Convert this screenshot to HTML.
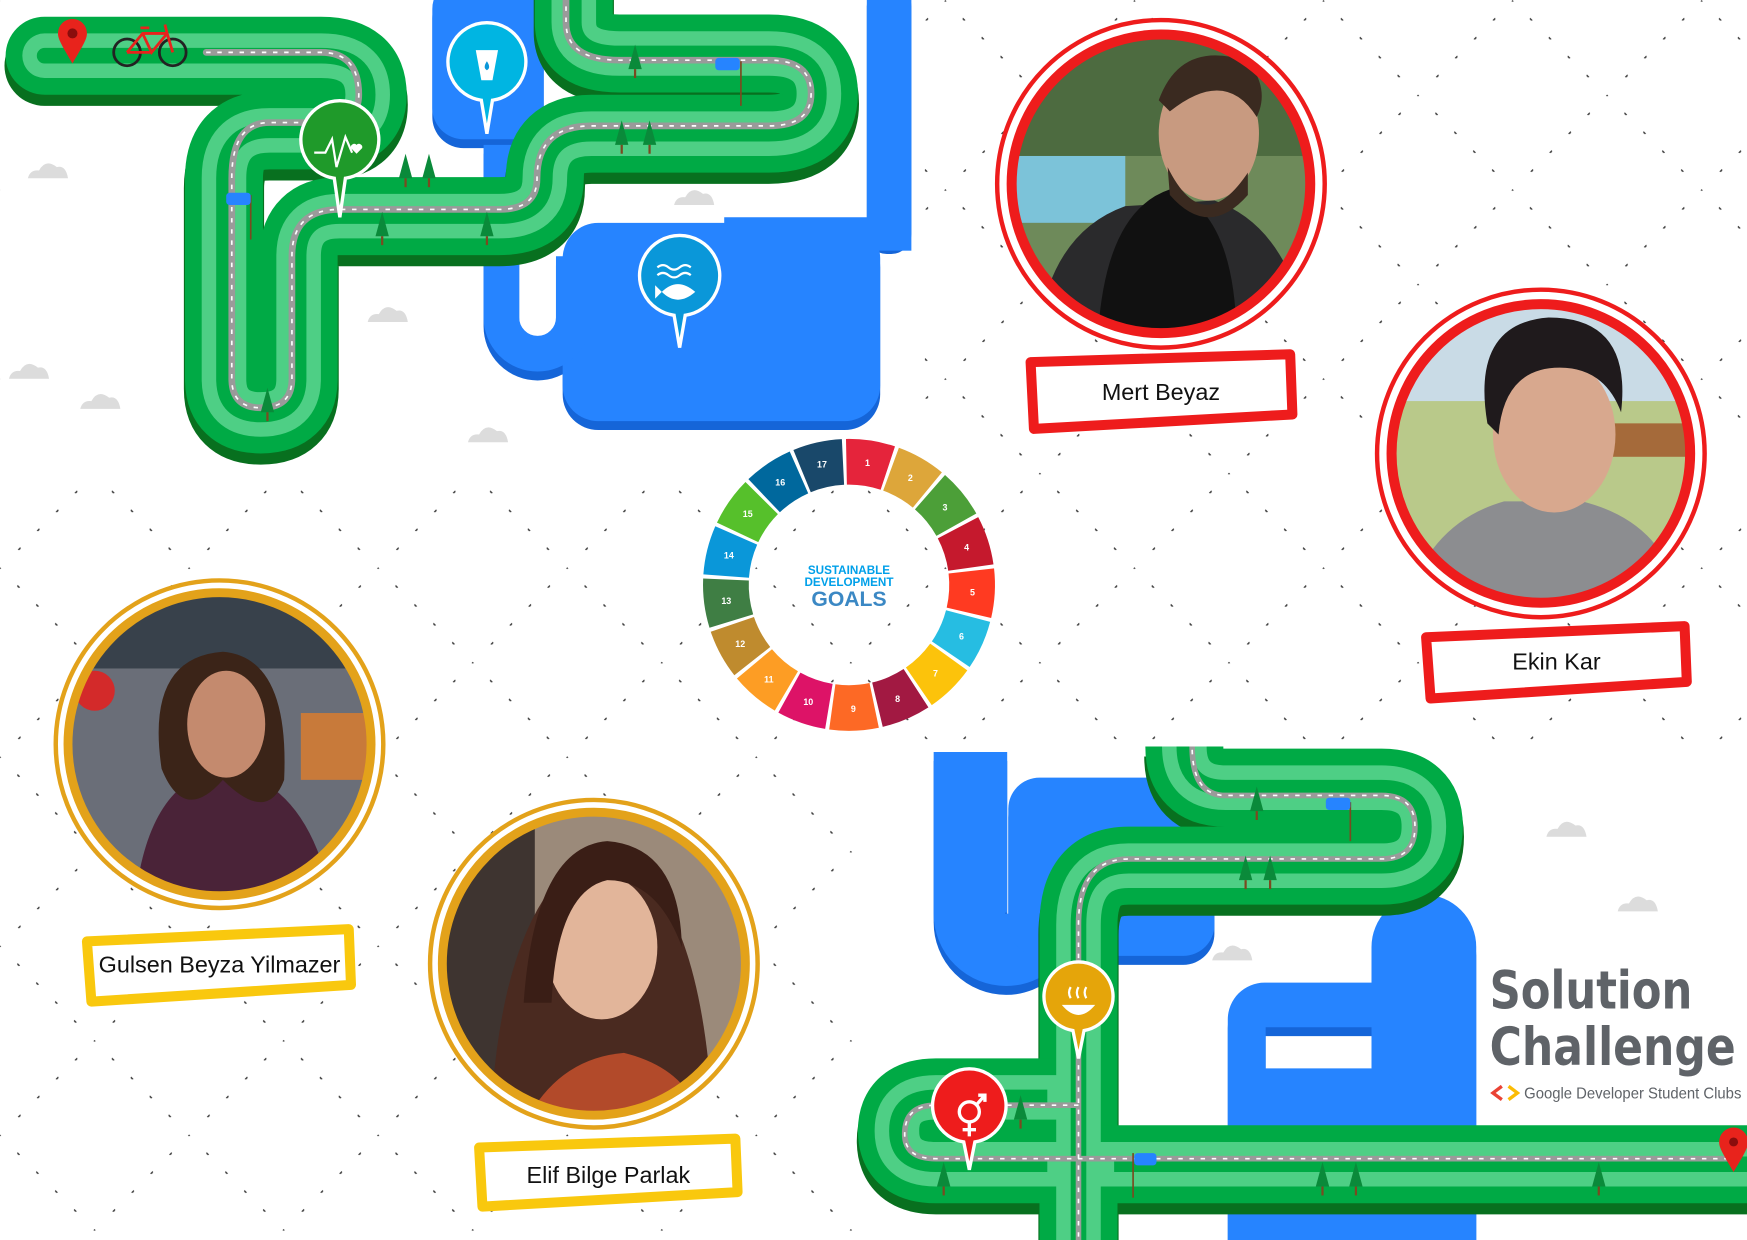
<!DOCTYPE html>
<html><head><meta charset="utf-8"><style>
html,body{margin:0;padding:0;background:#fff;overflow:hidden}
svg{display:block}
text{font-family:"Liberation Sans",sans-serif}
</style></head><body>
<svg id="s" width="1747" height="1240" viewBox="0 0 1568 1113" xmlns="http://www.w3.org/2000/svg">
<defs>
<pattern id="dots" width="120" height="120" patternUnits="userSpaceOnUse" patternTransform="rotate(45)">
<g fill="#444">
<circle cx="0" cy="0" r="1.5"/><circle cx="24" cy="0" r="1.5"/><circle cx="48" cy="0" r="1.5"/><circle cx="72" cy="0" r="1.5"/><circle cx="96" cy="0" r="1.5"/>
<circle cx="0" cy="24" r="1.5"/><circle cx="0" cy="48" r="1.5"/><circle cx="0" cy="72" r="1.5"/><circle cx="0" cy="96" r="1.5"/>
</g></pattern>
<clipPath id="cM"><circle cx="1042" cy="165" r="133"/></clipPath>
<clipPath id="cE"><circle cx="1383" cy="407" r="133"/></clipPath>
<clipPath id="cG"><circle cx="197" cy="668" r="135"/></clipPath>
<clipPath id="cB"><circle cx="533" cy="865" r="135"/></clipPath>
<g id="cloud"><path d="M0,14 Q2,6 10,7 Q16,-4 26,4 Q34,2 36,14 Z" fill="#dcdcdc"/></g>
<g id="tree"><polygon points="0,-22 -6,0 6,0" fill="#0a8a3a"/><rect x="-1" y="0" width="2" height="8" fill="#7a4a20"/></g>
</defs>
<rect width="1568" height="1113" fill="#fff"/>
<rect width="1568" height="1113" fill="url(#dots)"/>
<rect x="0" y="0" width="830" height="440" fill="#fff"/>
<rect x="770" y="665" width="798" height="448" fill="#fff"/>

<use href="#cloud" x="25" y="146"/><use href="#cloud" x="8" y="326"/><use href="#cloud" x="72" y="353"/>
<use href="#cloud" x="330" y="275"/><use href="#cloud" x="420" y="383"/><use href="#cloud" x="605" y="170"/>
<use href="#cloud" x="1388" y="737"/><use href="#cloud" x="1452" y="804"/><use href="#cloud" x="1088" y="848"/>

<!-- TOP blue -->
<g fill="#1565d8" transform="translate(0,8)">
<rect x="388" y="-20" width="100" height="145" rx="28"/>
<rect x="778" y="-20" width="40" height="240" rx="18"/>
<rect x="505" y="200" width="285" height="178" rx="32"/>
<path d="M450,130 V285 A32,32 0 0 0 515,285 V230" fill="none" stroke="#1565d8" stroke-width="32"/>
</g>
<g fill="#2684ff">
<rect x="388" y="-20" width="100" height="145" rx="28"/>
<rect x="778" y="-20" width="40" height="240" rx="18"/>
<rect x="505" y="200" width="285" height="178" rx="32"/>
<rect x="650" y="195" width="168" height="30"/>
<path d="M450,130 V285 A32,32 0 0 0 515,285 V230" fill="none" stroke="#2684ff" stroke-width="32"/>
</g>

<!-- TOP road -->
<g fill="none" stroke-linecap="round" stroke-linejoin="round">
<path transform="translate(0,9)" d="M40,50 H288 Q330,50 330,85 Q330,117 290,117 H242 Q201,117 201,160 V340 Q201,372 234,372 Q268,372 268,340 V230 Q268,194 305,194 H448 Q489,194 489,160 Q489,120 531,120 H690 Q735,120 735,84 Q735,48 690,48 H556 Q515,48 515,20 V-40" stroke="#08701f" stroke-width="72"/>
<path d="M40,50 H288 Q330,50 330,85 Q330,117 290,117 H242 Q201,117 201,160 V340 Q201,372 234,372 Q268,372 268,340 V230 Q268,194 305,194 H448 Q489,194 489,160 Q489,120 531,120 H690 Q735,120 735,84 Q735,48 690,48 H556 Q515,48 515,20 V-40" stroke="#00aa45" stroke-width="70"/>
<path d="M40,50 H288 Q330,50 330,85 Q330,117 290,117 H242 Q201,117 201,160 V340 Q201,372 234,372 Q268,372 268,340 V230 Q268,194 305,194 H448 Q489,194 489,160 Q489,120 531,120 H690 Q735,120 735,84 Q735,48 690,48 H556 Q515,48 515,20 V-40" stroke="#4ecf85" stroke-width="40"/>
<path d="M40,50 H288 Q330,50 330,85 Q330,117 290,117 H242 Q201,117 201,160 V340 Q201,372 234,372 Q268,372 268,340 V230 Q268,194 305,194 H448 Q489,194 489,160 Q489,120 531,120 H690 Q735,120 735,84 Q735,48 690,48 H556 Q515,48 515,20 V-40" stroke="#00aa45" stroke-width="14"/>
<path d="M185,47 H288 Q322,47 322,85 Q322,110 290,110 H242 Q208,110 208,160 V340 Q208,366 234,366 Q262,366 262,340 V230 Q262,188 305,188 H448 Q482,188 482,160 Q482,113 531,113 H690 Q728,113 728,84 Q728,54 690,54 H556 Q508,54 508,20 V-40" stroke="#9a9a9a" stroke-width="6"/>
<path d="M185,47 H288 Q322,47 322,85 Q322,110 290,110 H242 Q208,110 208,160 V340 Q208,366 234,366 Q262,366 262,340 V230 Q262,188 305,188 H448 Q482,188 482,160 Q482,113 531,113 H690 Q728,113 728,84 Q728,54 690,54 H556 Q508,54 508,20 V-40" stroke="#fff" stroke-width="1.5" stroke-dasharray="4 6" stroke-linecap="butt"/>
</g>
<g>
<use href="#tree" x="570" y="62"/><use href="#tree" x="364" y="160"/><use href="#tree" x="385" y="160"/><use href="#tree" x="558" y="130"/><use href="#tree" x="583" y="130"/><use href="#tree" x="343" y="212"/><use href="#tree" x="437" y="212"/><use href="#tree" x="240" y="370"/>
<line x1="665" y1="55" x2="665" y2="95" stroke="#7a4a20" stroke-width="1.5"/><rect x="642" y="52" width="22" height="11" rx="3" fill="#2684ff"/>
<line x1="225" y1="175" x2="225" y2="215" stroke="#7a4a20" stroke-width="1.5"/><rect x="203" y="173" width="22" height="11" rx="3" fill="#2684ff"/>
</g>
<path d="M65,57 C55,40 52,35 52,30 A13,13 0 0 1 78,30 C78,35 75,40 65,57Z" fill="#e8231c"/><circle cx="65" cy="30" r="4.5" fill="#8a0d0d"/>
<g fill="none" stroke="#222" stroke-width="2.5"><circle cx="114" cy="47" r="12"/><circle cx="155" cy="47" r="12"/></g>
<path d="M114,47 L128,30 L150,30 L155,47 M128,30 L136,47 L150,30 M136,47 L114,47 M150,30 L148,22 M126,25 H134" stroke="#e8231c" stroke-width="2.5" fill="none"/>
<g stroke="#fff" stroke-width="3">
<path d="M305,195 L300,160 A35,35 0 1 1 310,160 Z" fill="#1f9a2a"/>
<path d="M437,120 L432,90 A35,35 0 1 1 442,90 Z" fill="#00b5e2"/>
<path d="M610,312 L605,283 A36,36 0 1 1 615,283 Z" fill="#0a97d9"/>
</g>
<path d="M282,137 H292 L298,125 L302,150 L310,123 L316,137" fill="none" stroke="#fff" stroke-width="2"/><path d="M320,138 l-5,-5 a3,3 0 0 1 5,-3 a3,3 0 0 1 5,3z" fill="#fff"/>
<path d="M427,45 H447 L442,72 H432Z" fill="#fff"/><path d="M437,55 q-4,6 0,8 q4,-2 0,-8" fill="#0a97d9"/>
<path d="M590,240 q5,-4 10,0 t10,0 t10,0 M590,247 q5,-4 10,0 t10,0 t10,0" stroke="#fff" stroke-width="2" fill="none"/><path d="M594,262 q14,-14 30,0 q-16,14 -30,0 l-6,-6 v12z" fill="#fff"/>

<!-- BOTTOM blue -->
<g fill="#1565d8" transform="translate(0,8)">
<path d="M871,675 V820 A32,32 0 0 0 935,820" stroke="#1565d8" stroke-width="66" fill="none"/>
<rect x="905" y="698" width="185" height="160" rx="28"/>
<path d="M1231,1113 V850 A47,47 0 0 1 1325,850 V1113Z"/>
<path d="M1102,1113 V915 A33,33 0 0 1 1135,882 H1235 V922 H1136 V959 H1230 A29,29 0 0 1 1259,988 V1113Z"/>
</g>
<g fill="#2684ff">
<path d="M871,675 V820 A32,32 0 0 0 935,820" stroke="#2684ff" stroke-width="66" fill="none"/>
<rect x="905" y="698" width="185" height="160" rx="28"/>
<path d="M1231,1113 V850 A47,47 0 0 1 1325,850 V1113Z"/>
<path d="M1102,1113 V915 A33,33 0 0 1 1135,882 H1235 V922 H1136 V959 H1230 A29,29 0 0 1 1259,988 V1113Z"/>
</g>

<!-- BOTTOM roads -->
<g fill="none" stroke-linejoin="round">
<g transform="translate(0,9)" stroke="#08701f" stroke-width="72">
<path d="M968,1130 V830 Q968,777 1013,777 H1240 Q1278,777 1278,742 Q1278,707 1240,707 H1100 Q1063,707 1063,670"/>
<path d="M968,985 H840 Q805,985 805,1015 Q805,1045 840,1045 H1600"/>
</g>
<g stroke="#00aa45" stroke-width="70">
<path d="M968,1130 V830 Q968,777 1013,777 H1240 Q1278,777 1278,742 Q1278,707 1240,707 H1100 Q1063,707 1063,670"/>
<path d="M968,985 H840 Q805,985 805,1015 Q805,1045 840,1045 H1600"/>
</g>
<g stroke="#4ecf85" stroke-width="40">
<path d="M968,1130 V830 Q968,777 1013,777 H1240 Q1278,777 1278,742 Q1278,707 1240,707 H1100 Q1063,707 1063,670"/>
<path d="M968,985 H840 Q805,985 805,1015 Q805,1045 840,1045 H1600"/>
</g>
<g stroke="#00aa45" stroke-width="14">
<path d="M968,1130 V830 Q968,777 1013,777 H1240 Q1278,777 1278,742 Q1278,707 1240,707 H1100 Q1063,707 1063,670"/>
<path d="M940,985 H840 Q805,985 805,1015 Q805,1045 840,1045 H940 M1000,1045 H1600"/>
</g>
<g stroke="#9a9a9a" stroke-width="5">
<path d="M968,1130 V830 Q968,771 1013,771 H1240 Q1270,771 1270,742 Q1270,714 1240,714 H1100 Q1070,714 1070,670"/>
<path d="M968,992 H840 Q812,992 812,1018 Q812,1040 840,1040 H1560"/>
</g>
<g stroke="#fff" stroke-width="1.5" stroke-dasharray="4 6">
<path d="M968,1130 V830 Q968,771 1013,771 H1240 Q1270,771 1270,742 Q1270,714 1240,714 H1100 Q1070,714 1070,670"/>
<path d="M968,992 H840 Q812,992 812,1018 Q812,1040 840,1040 H1560"/>
</g>
</g>
<use href="#tree" x="1128" y="728"/><use href="#tree" x="1118" y="790"/><use href="#tree" x="1140" y="790"/><use href="#tree" x="916" y="1005"/><use href="#tree" x="847" y="1065"/><use href="#tree" x="1187" y="1065"/><use href="#tree" x="1217" y="1065"/><use href="#tree" x="1435" y="1065"/>
<line x1="1212" y1="720" x2="1212" y2="755" stroke="#7a4a20" stroke-width="1.5"/><rect x="1190" y="716" width="22" height="11" rx="3" fill="#2684ff"/>
<line x1="1017" y1="1035" x2="1017" y2="1075" stroke="#7a4a20" stroke-width="1.5"/><rect x="1018" y="1035" width="20" height="11" rx="3" fill="#2684ff"/>
<g stroke="#fff" stroke-width="3">
<path d="M968,950 L963,925 A31,31 0 1 1 973,925 Z" fill="#e5a50a"/>
<path d="M870,1050 L865,1025 A33,33 0 1 1 875,1025 Z" fill="#ee1c1c"/>
</g>
<path d="M953,902 q15,18 30,0z" fill="#fff"/><path d="M961,896 q-3,-5 0,-10 M968,896 q-3,-5 0,-10 M975,896 q-3,-5 0,-10" stroke="#fff" stroke-width="2" fill="none"/>
<circle cx="870" cy="998" r="9" fill="none" stroke="#fff" stroke-width="3"/><path d="M870,1007 v13 M864,1014 h12 M877,991 l7,-8 m-6,0 h6 v6" stroke="#fff" stroke-width="3" fill="none"/>
<path d="M1556,1052 C1546,1035 1543,1030 1543,1025 A13,13 0 0 1 1569,1025 C1569,1030 1566,1035 1556,1052Z" fill="#e8231c"/><circle cx="1556" cy="1025" r="4" fill="#8a0d0d"/>

<text x="1337" y="905" font-size="47" font-weight="bold" fill="#5f6368" style="font-family:'DejaVu Sans','Liberation Sans',sans-serif" textLength="182" lengthAdjust="spacingAndGlyphs">Solution</text>
<text x="1337" y="956" font-size="47" font-weight="bold" fill="#5f6368" style="font-family:'DejaVu Sans','Liberation Sans',sans-serif" textLength="221" lengthAdjust="spacingAndGlyphs">Challenge</text>
<path d="M1348,975 l-8,6 l8,6" stroke="#ea4335" stroke-width="3" fill="none"/><path d="M1354,975 l8,6 l-8,6" stroke="#fbbc04" stroke-width="3" fill="none"/>
<text x="1368" y="986" font-size="14" fill="#5f6368" textLength="195" lengthAdjust="spacingAndGlyphs">Google Developer Student Clubs</text>

<g id="wheel"></g>
<text x="762" y="515" font-size="10.5" font-weight="bold" fill="#00a0e9" text-anchor="middle">SUSTAINABLE</text>
<text x="762" y="526" font-size="10.5" font-weight="bold" fill="#00a0e9" text-anchor="middle">DEVELOPMENT</text>
<text x="762" y="544" font-size="19" font-weight="bold" fill="#3b88c4" text-anchor="middle">GOALS</text>

<!-- Mert -->
<circle cx="1042" cy="165" r="147" fill="#fff" stroke="#ee1c1c" stroke-width="4"/>
<g clip-path="url(#cM)">
<rect x="900" y="20" width="290" height="290" fill="#6e8a5a"/>
<rect x="900" y="20" width="290" height="120" fill="#4d6b40"/>
<rect x="900" y="140" width="110" height="60" fill="#7cc3d9"/>
<path d="M930,310 Q940,210 1010,185 L1090,180 Q1160,205 1175,310Z" fill="#2a2a2c"/>
<path d="M985,310 Q990,190 1050,170 Q1110,190 1110,310Z" fill="#111"/>
<ellipse cx="1085" cy="120" rx="45" ry="60" fill="#c89a80"/>
<path d="M1040,90 Q1060,35 1120,55 Q1140,80 1128,105 Q1100,60 1050,100Z" fill="#3a2a20"/>
<path d="M1048,150 Q1080,215 1120,155 L1120,175 Q1085,215 1050,175Z" fill="#3a2a20"/>
</g>
<circle cx="1042" cy="165" r="134" fill="none" stroke="#ee1c1c" stroke-width="9"/>
<!-- Ekin -->
<circle cx="1383" cy="407" r="147" fill="#fff" stroke="#ee1c1c" stroke-width="4"/>
<g clip-path="url(#cE)">
<rect x="1240" y="260" width="290" height="290" fill="#b9c98a"/>
<rect x="1240" y="260" width="290" height="100" fill="#c9dbe6"/>
<rect x="1430" y="380" width="100" height="30" fill="#a56a3a"/>
<path d="M1260,550 Q1280,470 1350,450 L1420,450 Q1500,470 1510,550Z" fill="#8c8d90"/>
<ellipse cx="1395" cy="390" rx="55" ry="70" fill="#d8a88e"/>
<path d="M1335,380 Q1320,290 1390,285 Q1465,285 1455,370 Q1440,330 1400,330 Q1350,330 1345,390Z" fill="#1f1a1c"/>
</g>
<circle cx="1383" cy="407" r="134" fill="none" stroke="#ee1c1c" stroke-width="9"/>
<!-- Gulsen -->
<circle cx="197" cy="668" r="147" fill="#fff" stroke="#e3a21a" stroke-width="4"/>
<g clip-path="url(#cG)">
<rect x="50" y="520" width="300" height="300" fill="#6a6e78"/>
<rect x="50" y="520" width="300" height="80" fill="#38414b"/>
<rect x="270" y="640" width="80" height="60" fill="#c87a3a"/>
<circle cx="85" cy="620" r="18" fill="#d32a2a"/>
<path d="M120,820 Q130,700 200,690 Q280,700 300,820Z" fill="#4a2338"/>
<path d="M145,690 Q130,590 200,585 Q260,590 255,700 Q240,740 200,700 Q165,740 145,690Z" fill="#3b2418"/>
<ellipse cx="203" cy="650" rx="35" ry="48" fill="#c48a6e"/>
</g>
<circle cx="197" cy="668" r="136" fill="none" stroke="#e3a21a" stroke-width="8"/>
<!-- Elif -->
<circle cx="533" cy="865" r="147" fill="#fff" stroke="#e3a21a" stroke-width="4"/>
<g clip-path="url(#cB)">
<rect x="390" y="720" width="290" height="290" fill="#9b8a7a"/>
<rect x="390" y="720" width="90" height="290" fill="#3e3430"/>
<path d="M440,1010 Q450,800 540,760 Q630,790 640,1010Z" fill="#4a2a20"/>
<ellipse cx="540" cy="850" rx="50" ry="65" fill="#e2b59a"/>
<path d="M470,900 Q480,760 545,755 Q610,760 612,850 Q590,790 545,790 Q500,800 495,900Z" fill="#3a1e16"/>
<path d="M470,1010 Q500,950 560,945 Q620,960 630,1010Z" fill="#b24a2a"/>
</g>
<circle cx="533" cy="865" r="136" fill="none" stroke="#e3a21a" stroke-width="8"/>

<g stroke-linejoin="round">
<path d="M925,325 L1158,318 L1160,372 L928,385 Z" fill="#fff" stroke="#ee1c1c" stroke-width="9"/>
<path d="M1280,572 L1512,562 L1514,612 L1284,627 Z" fill="#fff" stroke="#ee1c1c" stroke-width="9"/>
<path d="M78,845 L313,834 L315,884 L82,899 Z" fill="#fff" stroke="#f9c80e" stroke-width="9"/>
<path d="M430,1030 L660,1022 L662,1070 L433,1083 Z" fill="#fff" stroke="#f9c80e" stroke-width="9"/>
</g>
<text x="1042" y="359" font-size="21" text-anchor="middle" fill="#111">Mert Beyaz</text>
<text x="1397" y="601" font-size="21" text-anchor="middle" fill="#111">Ekin Kar</text>
<text x="197" y="873" font-size="21" text-anchor="middle" fill="#111">Gulsen Beyza Yilmazer</text>
<text x="546" y="1062" font-size="21" text-anchor="middle" fill="#111">Elif Bilge Parlak</text>
</svg>
<script>
(function(){
var c=["#E5243B","#DDA63A","#4C9F38","#C5192D","#FF3A21","#26BDE2","#FCC30B","#A21942","#FD6925","#DD1367","#FD9D24","#BF8B2E","#3F7E44","#0A97D9","#56C02B","#00689D","#19486A"];
var cx=762,cy=525,R=131,r=90,g=document.getElementById("wheel"),s="";
for(var i=0;i<17;i++){
 var a0=(-92+i*360/17+0.8)*Math.PI/180,a1=(-92+(i+1)*360/17-0.8)*Math.PI/180;
 function p(rr,a){return (cx+rr*Math.cos(a)).toFixed(1)+","+(cy+rr*Math.sin(a)).toFixed(1);}
 s+='<path d="M'+p(R,a0)+' A'+R+','+R+' 0 0 1 '+p(R,a1)+' L'+p(r,a1)+' A'+r+','+r+' 0 0 0 '+p(r,a0)+'Z" fill="'+c[i]+'"/>';
 var am=(a0+a1)/2;
 s+='<text x="'+(cx+111*Math.cos(am)).toFixed(1)+'" y="'+(cy+111*Math.sin(am)+3).toFixed(1)+'" font-size="8" font-weight="bold" fill="#fff" text-anchor="middle">'+(i+1)+'</text>';
}
g.innerHTML=s;
})();
</script>
</body></html>
